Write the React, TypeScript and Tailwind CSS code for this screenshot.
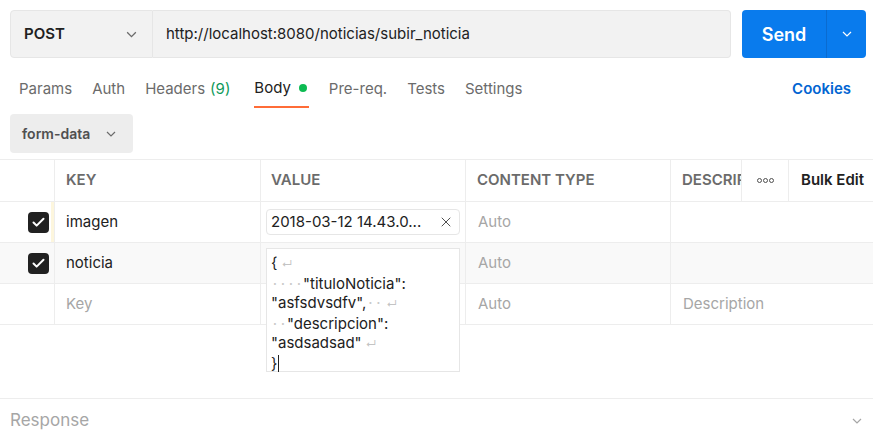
import { Check, X } from "lucide-react";

const Chevron = ({ className = "" }: { className?: string }) => (
  <svg viewBox="0 0 12 12" className={className} fill="none" stroke="currentColor" strokeWidth="1.2">
    <path d="M2 4l4 4 4-4" />
  </svg>
);

const Dots = ({ n }: { n: number }) => (
  <>
    {Array.from({ length: n }).map((_, i) => (
      <span key={i} className="inline-block w-[8px] text-center text-[#c9c9c9]">
        ·
      </span>
    ))}
  </>
);

const Ret = () => <span className="ml-[4px] text-[11px] text-[#c4c4c4]">↵</span>;

function CheckBox() {
  return (
    <div className="w-[21px] h-[21px] rounded-[4px] bg-[#212121] flex items-center justify-center">
      <Check className="w-[15px] h-[15px] text-white" strokeWidth={3.2} />
    </div>
  );
}

export default function App() {
  return (
    <div
      className="relative w-[873px] h-[435px] overflow-hidden bg-white text-[#212121]"
      style={{ fontFamily: "Inter, 'Noto Sans', sans-serif" }}
    >
      {/* barra de la petición */}
      <div className="flex h-[58px] pt-[10px] pl-[10px] pr-[7px]">
        <div className="flex w-[143px] shrink-0 items-center justify-between rounded-l-[4px] border border-[#e6e6e6] bg-[#f2f2f2] pl-[13px] pr-[14px]">
          <span className="text-[15px] font-semibold">POST</span>
          <Chevron className="w-[13px] h-[13px] text-[#6b6b6b]" />
        </div>
        <div className="flex w-[578px] shrink-0 items-center rounded-r-[4px] border-y border-r border-[#e6e6e6] bg-[#f2f2f2] pl-[13px] text-[15px]">
          http://localhost:8080/noticias/subir_noticia
        </div>
        <div className="ml-[11px] flex w-[124px] shrink-0 rounded-[4px] bg-[#097bed] text-white">
          <div className="flex w-[84px] items-center justify-center text-[18px] font-semibold">Send</div>
          <div className="w-px bg-[#0a6bd0]" />
          <div className="flex flex-1 items-center justify-center">
            <Chevron className="w-[12px] h-[12px]" />
          </div>
        </div>
      </div>

      {/* pestañas */}
      <div className="mt-[12px] flex h-[38px] items-stretch pl-[19px] pr-[22px] text-[15px] text-[#6b6b6b]">
        <div className="flex gap-[20px]">
          <div className="flex items-center">Params</div>
          <div className="flex items-center">Auth</div>
          <div className="flex items-center">
            Headers<span className="ml-[5px] text-[#0f9a5a]">(9)</span>
          </div>
          <div className="ml-[4px] flex items-center border-b-2 border-[#ff6c37] text-[#212121]">
            Body<span className="ml-[8px] mr-[2px] inline-block w-[8px] h-[8px] rounded-full bg-[#0cbb52]" />
          </div>
          <div className="flex items-center">Pre-req.</div>
          <div className="flex items-center">Tests</div>
          <div className="flex items-center">Settings</div>
        </div>
        <div className="ml-auto flex items-center font-semibold text-[#0265d2]">Cookies</div>
      </div>

      {/* tipo de body */}
      <div className="mt-[6px] ml-[10px] flex h-[39px] w-[123px] items-center justify-between rounded-[4px] bg-[#ededed] pl-[12px] pr-[16px]">
        <span className="text-[14px] font-semibold text-[#505050]">form-data</span>
        <Chevron className="w-[12px] h-[12px] text-[#6b6b6b]" />
      </div>

      {/* tabla */}
      <div className="mt-[6px] border-t border-[#ededed]">
        <div className="flex h-[42px] border-b border-[#ededed] text-[15px] font-semibold text-[#6b6b6b]">
          <div className="w-[55px] border-r border-[#ededed]" />
          <div className="flex w-[206px] items-center border-r border-[#ededed] pl-[11px]">KEY</div>
          <div className="flex w-[205px] items-center border-r border-[#ededed] pl-[10px]">VALUE</div>
          <div className="flex w-[205px] items-center border-r border-[#ededed] pl-[11px]">CONTENT TYPE</div>
          <div className="flex w-[71px] items-center overflow-hidden whitespace-nowrap border-r border-[#ededed] pl-[11px]">
            DESCRIPTION
          </div>
          <div className="flex w-[47px] items-center justify-center gap-[1px] border-r border-[#ededed]">
            {[0, 1, 2].map((i) => (
              <span key={i} className="inline-block w-[5px] h-[5px] rounded-full border border-[#505050]" />
            ))}
          </div>
          <div className="flex flex-1 items-center pl-[12px] text-[#212121]">Bulk Edit</div>
        </div>

        {/* fila imagen */}
        <div className="flex h-[41px] border-b border-[#ededed] text-[15px]">
          <div className="flex w-[55px] items-center justify-end border-r border-[#ededed]">
            <div className="mr-[2px]">
              <CheckBox />
            </div>
            <div className="h-full w-[3px] bg-[#fdf6dd]" />
          </div>
          <div className="flex w-[206px] items-center border-r border-[#ededed] pl-[11px]">imagen</div>
          <div className="flex w-[205px] items-center border-r border-[#ededed] pl-[5px]">
            <div className="flex h-[26px] w-[194px] items-center justify-between rounded-[4px] border border-[#e6e6e6] pl-[4px] pr-[5px]">
              <span>2018-03-12 14.43.0...</span>
              <X className="w-[16px] h-[16px] text-[#505050]" strokeWidth={1.5} />
            </div>
          </div>
          <div className="flex w-[205px] items-center border-r border-[#ededed] pl-[12px] text-[#a6a6a6]">Auto</div>
          <div className="flex-1" />
        </div>

        {/* fila noticia */}
        <div className="flex h-[41px] border-b border-[#ededed] bg-[#f9f9f9] text-[15px]">
          <div className="flex w-[55px] items-center justify-end border-r border-[#ededed] pr-[5px]">
            <CheckBox />
          </div>
          <div className="flex w-[206px] items-center border-r border-[#ededed] pl-[11px]">noticia</div>
          <div className="relative w-[205px] border-r border-[#ededed]">
            <div className="absolute left-[5px] top-[5px] z-10 h-[124px] w-[194px] border border-[#e6e6e6] bg-white pl-[4px] pt-[4px] text-[15px] leading-[19px]">
              <div>
                {"{"}
                <Ret />
              </div>
              <div>
                <Dots n={4} />
                "tituloNoticia":
              </div>
              <div>
                "asfsdvsdfv",
                <Dots n={2} />
                <Ret />
              </div>
              <div>
                <Dots n={2} />
                "descripcion":
              </div>
              <div>
                "asdsadsad"
                <Ret />
              </div>
              <div className="flex items-center">
                {"}"}
                <span className="ml-px inline-block h-[17px] w-px bg-[#212121]" />
              </div>
            </div>
          </div>
          <div className="flex w-[205px] items-center border-r border-[#ededed] pl-[12px] text-[#a6a6a6]">Auto</div>
          <div className="flex-1" />
        </div>

        {/* fila vacía */}
        <div className="flex h-[41px] border-b border-[#ededed] text-[15px] text-[#a6a6a6]">
          <div className="w-[55px] border-r border-[#ededed]" />
          <div className="flex w-[206px] items-center border-r border-[#ededed] pl-[11px]">Key</div>
          <div className="w-[205px] border-r border-[#ededed]" />
          <div className="flex w-[205px] items-center border-r border-[#ededed] pl-[12px]">Auto</div>
          <div className="flex flex-1 items-center pl-[12px]">Description</div>
        </div>
      </div>

      {/* respuesta */}
      <div className="mt-[73px] flex h-[44px] items-center justify-between border-t border-[#ededed] pl-[10px] pr-[10px]">
        <span className="text-[17px] text-[#a6a6a6]">Response</span>
        <Chevron className="w-[12px] h-[12px] text-[#a6a6a6]" />
      </div>
    </div>
  );
}
